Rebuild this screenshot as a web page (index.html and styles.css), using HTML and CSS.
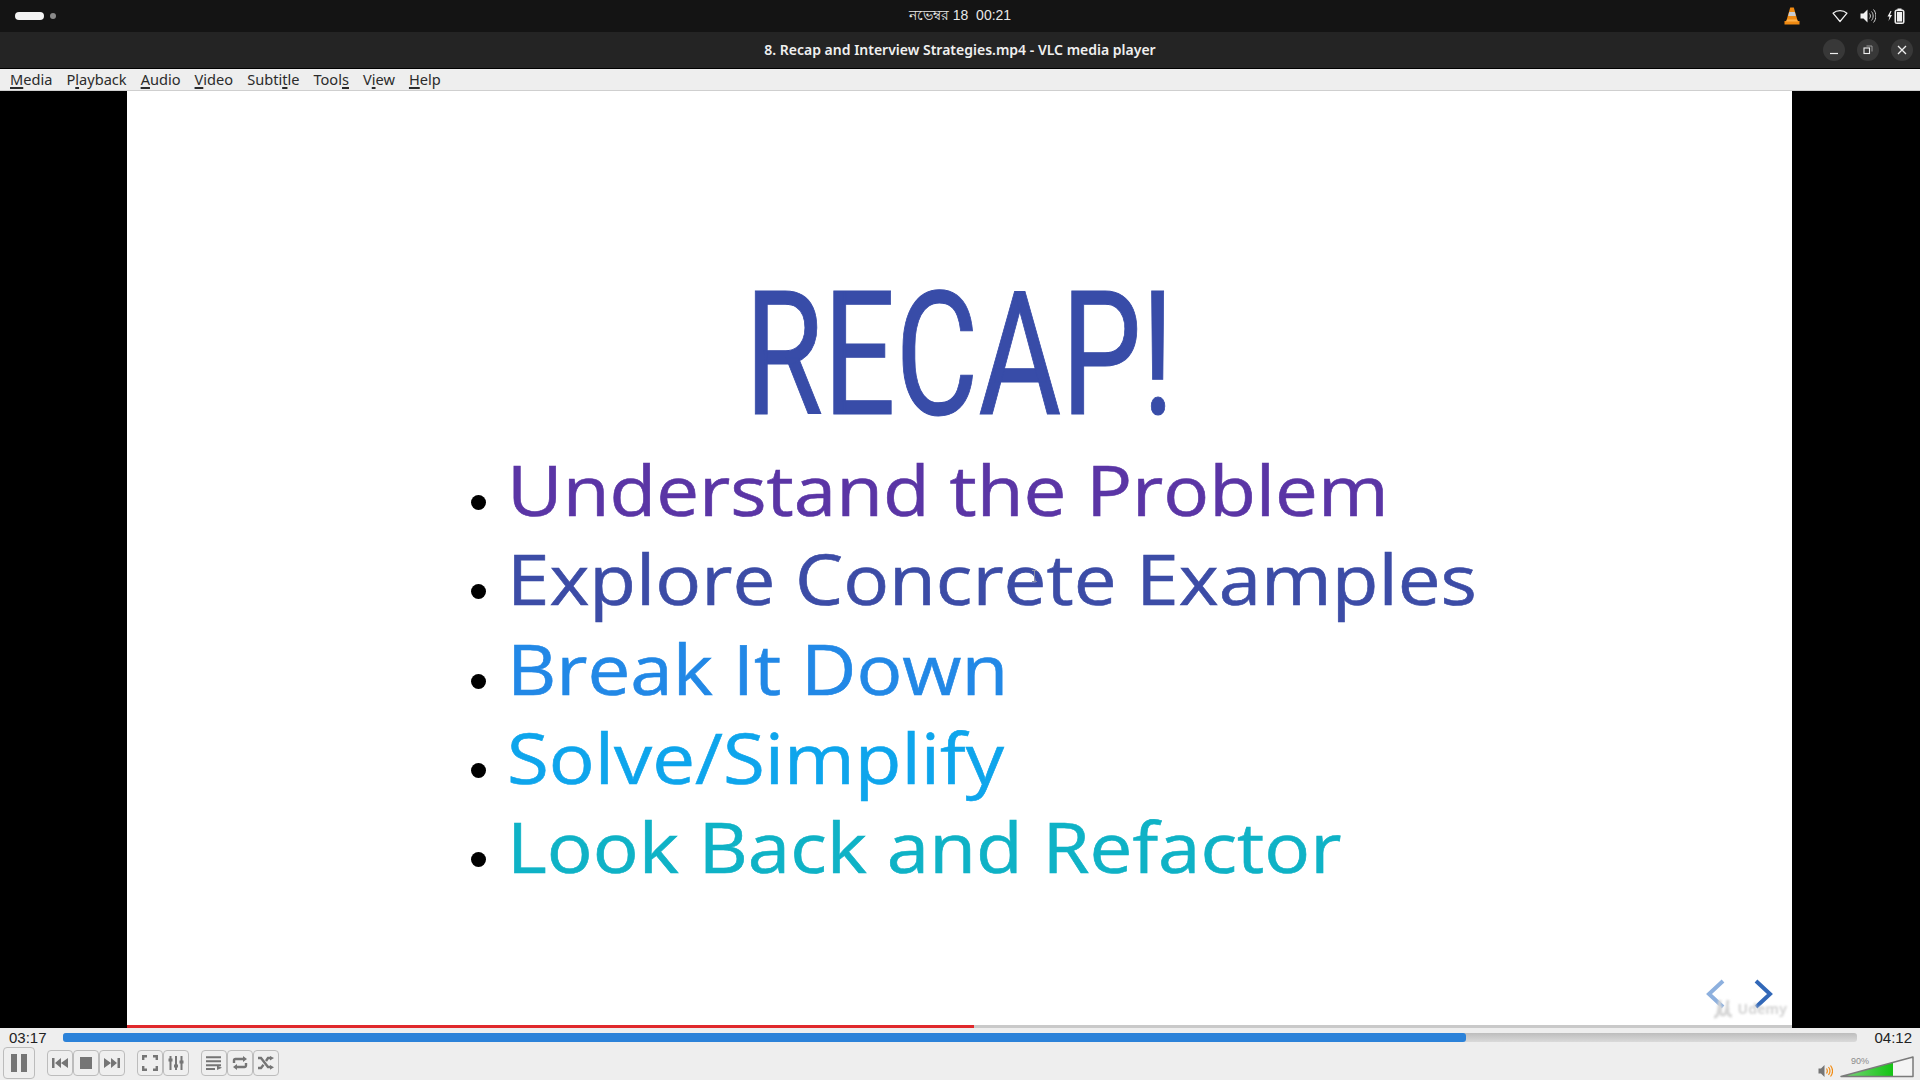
FILE: index.html
```html
<!DOCTYPE html>
<html lang="en">
<head>
  <meta charset="UTF-8" />
  <title>8. Recap and Interview Strategies.mp4 - VLC media player</title>
  <link rel="stylesheet" href="styles.css">
</head>
<body>
  <div class="topbar">
    <div class="workspaces">
      <span class="pill"></span>
      <span class="dot"></span>
    </div>
    <div class="clock">নভেম্বর 18&nbsp;&nbsp;00:21</div>
    <div class="tray">
      <svg class="tray-cone" width="16" height="18" viewBox="0 0 16 18">
        <path d="M6.200 0.500h3.600l4 14h-11.600z" fill="#f08a12"/>
        <path d="M5.200 5h5.600l1 4h-7.600z" fill="#c9cdd3"/>
        <path d="M0.500 14h15v3.500h-15z" fill="#f08a12"/>
        <path d="M3 12.500h10l1 2h-12z" fill="#ffb14a"/>
      </svg>
      <svg class="tray-wifi" width="16" height="14" viewBox="0 0 16 14">
        <path d="M8 12.500L1 4.200C5 0.800 11 0.800 15 4.200z" fill="none" stroke="#f2f2f2" stroke-width="1.200" stroke-linejoin="round"/>
      </svg>
      <svg class="tray-vol" width="16" height="16" viewBox="0 0 16 16">
        <path d="M0.500 5.500h3l4-4v13l-4-4h-3z" fill="#f2f2f2"/>
        <path d="M9.500 5.500c1.200 1.500 1.200 3.500 0 5M11.500 3.500c2.200 2.600 2.200 6.400 0 9M13.500 1.500c3.200 3.800 3.200 9.200 0 13" fill="none" stroke="#cfcfcf" stroke-width="1"/>
      </svg>
      <svg class="tray-batt" width="18" height="16" viewBox="0 0 18 16">
        <path d="M3.500 3L0.500 8.500h2l-1 4.500 3.500-6h-2l1.500-4z" fill="#f2f2f2"/>
        <rect x="8" y="2" width="9" height="13.500" rx="1.500" fill="#f2f2f2" stroke="#f2f2f2"/>
        <rect x="10.500" y="0.500" width="4" height="1.500" fill="#f2f2f2"/>
        <rect x="9" y="3" width="7" height="11.500" rx="0.500" fill="#2a2a2a"/>
        <rect x="10" y="4" width="5" height="9.500" fill="#f2f2f2"/>
      </svg>
    </div>
  </div>

  <div class="titlebar">
    <h1>8. Recap and Interview Strategies.mp4 - VLC media player</h1>
    <div class="win-buttons">
      <button class="win-btn"><svg width="10" height="10" viewBox="0 0 10 10"><path d="M1 8.500h8" stroke="#eee" stroke-width="1.200"/></svg></button>
      <button class="win-btn"><svg width="10" height="10" viewBox="0 0 10 10"><rect x="1" y="3" width="5.500" height="5.500" fill="none" stroke="#eee" stroke-width="1.100"/><path d="M3.500 1h5.500v5.500" fill="none" stroke="#999" stroke-width="1"/></svg></button>
      <button class="win-btn"><svg width="10" height="10" viewBox="0 0 10 10"><path d="M1 1l8 8M9 1l-8 8" stroke="#eee" stroke-width="1.300"/></svg></button>
    </div>
  </div>

  <nav class="menubar">
    <a><u>M</u>edia</a>
    <a>P<u>l</u>ayback</a>
    <a><u>A</u>udio</a>
    <a><u>V</u>ideo</a>
    <a>Subti<u>t</u>le</a>
    <a>Tool<u>s</u></a>
    <a>V<u>i</u>ew</a>
    <a><u>H</u>elp</a>
  </nav>

  <main class="video">
    <section class="slide">
      <h2 class="slide-title">RECAP!</h2>
      <ul class="slide-list">
        <li class="purple"><span>Understand the Problem</span></li>
        <li class="indigo"><span>Explore Concrete Examples</span></li>
        <li class="blue"><span>Break It Down</span></li>
        <li class="sky"><span>Solve/Simplify</span></li>
        <li class="teal"><span>Look Back and Refactor</span></li>
      </ul>

      <svg class="slide-cursor" width="7" height="12" viewBox="0 0 7 12">
        <path d="M1 0.500h5M1 11.500h5M3.500 0.500v11" fill="none" stroke="#8a8fa8" stroke-width="1"/>
      </svg>
      <svg class="slide-nav" width="70" height="32" viewBox="0 0 70 32">
        <path d="M18 3L4 16l14 13" fill="none" stroke="#8db0de" stroke-width="4"/>
        <path d="M51 3l14 13-14 13" fill="none" stroke="#3268b8" stroke-width="4"/>
      </svg>
      <div class="watermark">
        <svg width="22" height="21" viewBox="0 0 22 21">
          <path d="M2 19c3 0 4-2 4.500-6L8 2M9 8c-1 5-1 9 2 9 4 0 4-8 5-15M16 9c-1 5 0 9 4 9" fill="none" stroke="#d6d6d6" stroke-width="3"/>
        </svg>
        <span>Udemy</span>
      </div>
      <div class="slide-progress"><div class="slide-progress-fill"></div></div>
    </section>
  </main>

  <div class="seekrow">
    <span class="time time-left">03:17</span>
    <div class="seekbar"><div class="seekbar-fill"></div></div>
    <span class="time time-right">04:12</span>
  </div>

  <div class="controls">
    <button class="ctl ctl-big">
      <svg width="16" height="20" viewBox="0 0 16 20"><path d="M0 1h6v18H0zM10 1h6v18h-6z" fill="#757575"/></svg>
    </button>
    <div class="ctl-group">
      <button class="ctl"><svg width="16" height="12" viewBox="0 0 16 12"><path d="M0 1h2.500v10H0zM9 1v10L3 6zM16 1v10l-7-5z" fill="#757575"/></svg></button>
      <button class="ctl"><svg width="12" height="12" viewBox="0 0 12 12"><rect width="12" height="12" fill="#757575"/></svg></button>
      <button class="ctl"><svg width="16" height="12" viewBox="0 0 16 12"><path d="M0 1v10l7-5zM7 1v10l6-5zM13.500 1H16v10h-2.500z" fill="#757575"/></svg></button>
    </div>
    <div class="ctl-group">
      <button class="ctl"><svg width="16" height="16" viewBox="0 0 16 16"><path d="M1.200 5V1.200h3.800M11 1.200h3.800V5M14.800 11v3.800H11M5 14.800H1.200V11" fill="none" stroke="#757575" stroke-width="2.400"/></svg></button>
      <button class="ctl"><svg width="16" height="16" viewBox="0 0 16 16"><path d="M2.500 1v14M8 1v14M13.500 1v14" stroke="#757575" stroke-width="2"/><path d="M0.500 5h4M6 11h4M11.500 7h4" stroke="#757575" stroke-width="2.800"/></svg></button>
    </div>
    <div class="ctl-group">
      <button class="ctl"><svg width="16" height="14" viewBox="0 0 16 14"><path d="M0 1.200h15M0 5.200h15M0 9.200h15M0 13h9" stroke="#757575" stroke-width="2"/><path d="M11 9.500l5 2.200-5 2.200z" fill="#757575"/></svg></button>
      <button class="ctl"><svg width="16" height="14" viewBox="0 0 16 14"><path d="M2 7V4.500a1.500 1.500 0 0 1 1.500-1.500H11M14 7v2.500a1.500 1.500 0 0 1-1.500 1.500H5" fill="none" stroke="#757575" stroke-width="2.400"/><path d="M11 0l4 3-4 3zM5 8l-4 3 4 3z" fill="#757575"/></svg></button>
      <button class="ctl"><svg width="16" height="14" viewBox="0 0 16 14"><path d="M0 2h3l7 9h3M0 12h3l2.500-3.200M8 5l2-3h3" fill="none" stroke="#757575" stroke-width="2.400"/><path d="M12 0l4 2-4 2.500zM12 9l4 2.300-4 2.500z" fill="#757575"/></svg></button>
    </div>

    <div class="volume">
      <svg width="15" height="14" viewBox="0 0 15 14">
        <path d="M0.500 4.500h2.500l3.500-3.500v12l-3.500-3.500H0.500z" fill="#757575"/>
        <path d="M8.500 4.500c1 1.500 1 3.500 0 5M10.500 3c1.800 2.400 1.800 5.600 0 8M12.500 1.500c2.500 3.300 2.500 7.700 0 11" fill="none" stroke="#f28c13" stroke-width="1.200"/>
      </svg>
      <div class="vol-slider">
        <svg width="74" height="22" viewBox="0 0 74 22">
          <defs>
            <linearGradient id="volFill" x1="0" x2="1" y1="0" y2="0">
              <stop offset="0" stop-color="#7fd67f"/>
              <stop offset="1" stop-color="#14c414"/>
            </linearGradient>
          </defs>
          <path d="M1 20.500L73 1v19.500z" fill="#f4f4f4"/>
          <path d="M1 20.500L53 6.400v14.100z" fill="url(#volFill)"/>
          <path d="M1 20.500L73 1v19.500z" fill="none" stroke="#7a7a7a" stroke-width="1.500" stroke-linejoin="round"/>
        </svg>
        <span class="vol-label">90%</span>
      </div>
    </div>
  </div>
</body>
</html>
```

FILE: styles.css
```css
* {
  box-sizing: border-box;
}

html,
body {
  height: 100%;
}

body {
  margin: 0;
  display: flex;
  flex-direction: column;
  height: 1080px;
  overflow: hidden;
  background: #000;
  font-family: "Noto Sans", "Open Sans", sans-serif;
}

/* Desktop top bar */
.topbar {
  height: 32px;
  flex: none;
  background: #141414;
  display: grid;
  grid-template-columns: 1fr auto 1fr;
  align-items: center;
  padding: 0 15px;
}

.workspaces {
  display: flex;
  align-items: center;
  gap: 6px;
}

.pill {
  width: 29px;
  height: 8px;
  border-radius: 4px;
  background: #f4f4f4;
}

.dot {
  width: 6px;
  height: 6px;
  border-radius: 50%;
  background: #8a8a8a;
}

.clock {
  color: #e8e8e8;
  font-size: 14px;
  font-family: "Liberation Sans", "Noto Sans", sans-serif;
}

.tray {
  display: flex;
  align-items: center;
  justify-content: flex-end;
}

.tray-cone {
  margin-right: 32px;
}

.tray-wifi {
  margin-right: 12px;
}

.tray-vol {
  margin-right: 11px;
}

/* Window title */
.titlebar {
  height: 37px;
  flex: none;
  background: #242424;
  border-bottom: 1px solid #000;
  padding-bottom: 2px;
  position: relative;
  display: flex;
  align-items: center;
  justify-content: center;
}

.titlebar h1 {
  margin: 0;
  color: #f0f0f0;
  font-size: 14px;
  font-weight: 600;
}

.win-buttons {
  position: absolute;
  right: 7px;
  top: 7px;
  display: flex;
  gap: 12px;
}

.win-btn {
  width: 22px;
  height: 22px;
  padding: 0;
  border: none;
  border-radius: 50%;
  background: #383838;
  display: flex;
  align-items: center;
  justify-content: center;
}

/* Menu */
.menubar {
  height: 22px;
  flex: none;
  background: #eeeeee;
  border-bottom: 1px solid #cfcfcf;
  padding-bottom: 2px;
  display: flex;
  align-items: center;
  padding-left: 10px;
  gap: 14px;
  font-size: 14.600px;
  color: #2b2b2b;
}

.menubar u {
  text-decoration-thickness: 2px;
  text-underline-offset: 2px;
}

/* Video */
.video {
  height: 937px;
  flex: none;
  background: #000;
  padding-left: 127px;
}

.slide {
  width: 1665px;
  height: 100%;
  background: #fff;
  position: relative;
  padding-top: 176px;
}

.slide-title {
  margin: 0;
  height: 176px;
  text-align: center;
  color: #384ca8;
  font-family: Roboto, "Liberation Sans", sans-serif;
  font-size: 173px;
  line-height: 176px;
  font-weight: 400;
  -webkit-text-stroke: 1px #384ca8;
  transform: scaleX(0.735);
}

.slide-list {
  list-style: none;
  margin: 0;
  padding: 2px 0 0 380px;
}

.slide-list li {
  position: relative;
  height: 89.300px;
  font-family: "Open Sans", sans-serif;
  font-size: 69px;
  line-height: 89px;
  white-space: nowrap;
  -webkit-text-stroke: 0.6px currentColor;
}

.slide-list li span {
  display: inline-block;
  transform: scaleX(1.106);
  transform-origin: left center;
}

.slide-list li::before {
  content: "";
  position: absolute;
  left: -36px;
  top: 50px;
  width: 15px;
  height: 15px;
  border-radius: 50%;
  background: #000;
}

.purple { color: #5a35a5; }
.indigo { color: #3c4ca6; }
.blue { color: #2288e6; }
.sky { color: #0ea5ec; }
.teal { color: #0fb2c6; }

.slide-cursor {
  position: absolute;
  left: 904px;
  top: 479px;
}

.slide-nav {
  position: absolute;
  right: 17px;
  bottom: 18px;
}

.watermark {
  position: absolute;
  right: 5px;
  bottom: 9px;
  display: flex;
  align-items: center;
  gap: 4px;
  color: #d6d6d6;
  font-size: 14px;
  font-weight: 700;
  filter: blur(1px);
}

.slide-progress {
  position: absolute;
  left: 0;
  right: 0;
  bottom: 0;
  height: 3px;
  background: #c9c9c9;
}

.slide-progress-fill {
  width: 847px;
  height: 100%;
  background: #e0282c;
}

/* Seek bar */
.seekrow {
  height: 17px;
  flex: none;
  background: #eeeeee;
  display: flex;
  align-items: center;
  padding: 0 8px 0 9px;
}

.time {
  font-family: "Liberation Sans", sans-serif;
  font-size: 15px;
  color: #222;
  padding-top: 2px;
}

.time-right {
  margin-left: 17px;
}

.seekbar {
  flex: 1;
  margin-left: 16.500px;
  height: 9px;
  margin-top: 2px;
  border-radius: 3px;
  background: linear-gradient(#bdbdbd, #dadada);
}

.seekbar-fill {
  width: 1403px;
  height: 100%;
  border-radius: 3px;
  background: #2b82d9;
}

/* Playback controls */
.controls {
  height: 35px;
  flex: none;
  background: #eeeeee;
  display: flex;
  align-items: flex-start;
  padding: 2px 0 0 3px;
}

.ctl {
  width: 26px;
  height: 26px;
  margin-top: 3px;
  padding: 0;
  border: 1px solid #bcbcbc;
  border-radius: 4px;
  background: #efefef;
  display: flex;
  align-items: center;
  justify-content: center;
}

.ctl-big {
  width: 32px;
  height: 32px;
  margin-top: 0;
  margin-right: 12px;
}

.ctl-group {
  display: flex;
  margin-right: 12px;
}

.volume {
  margin-left: auto;
  display: flex;
  align-items: flex-end;
  gap: 7px;
  padding: 9px 6px 0 0;
}

.vol-slider {
  position: relative;
  height: 22px;
}

.vol-label {
  position: absolute;
  left: 11px;
  top: 0;
  font-family: "Liberation Sans", sans-serif;
  font-size: 9px;
  color: #8a8a8a;
}
```
